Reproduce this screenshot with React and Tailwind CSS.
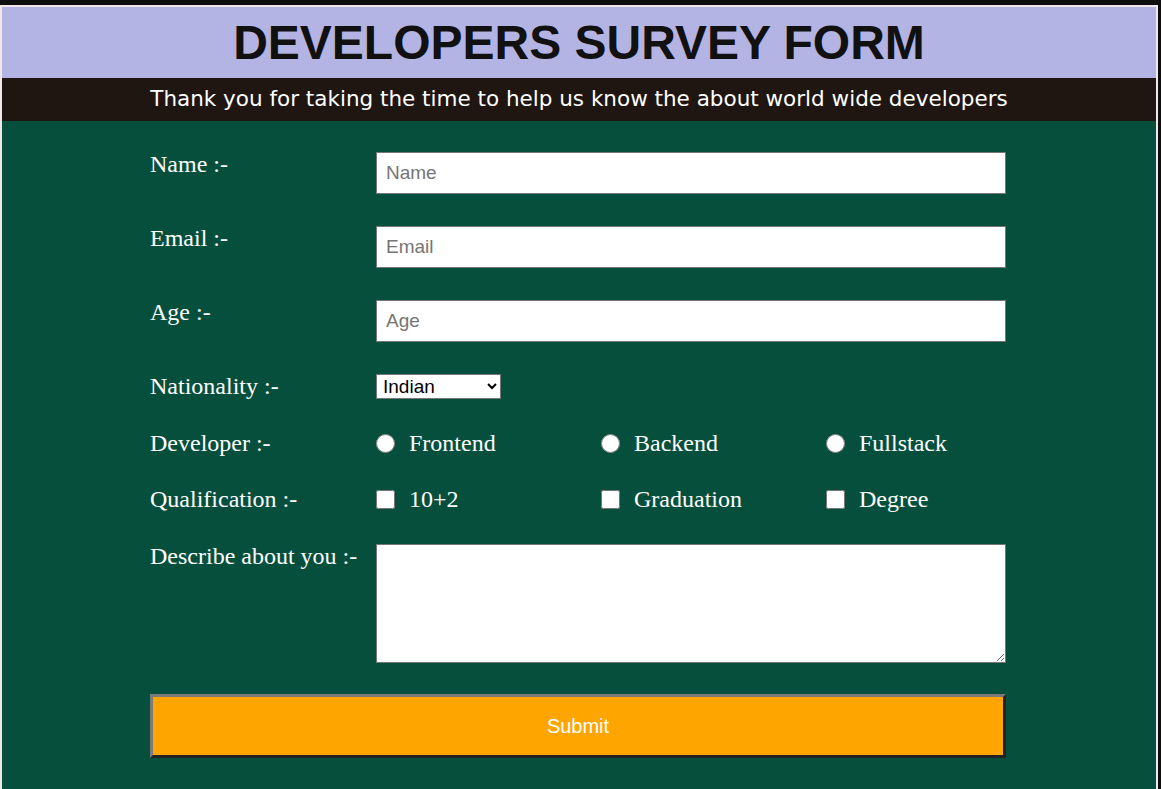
const textInputs = [
  { label: "Name :-", placeholder: "Name", type: "text" },
  { label: "Email :-", placeholder: "Email", type: "email" },
  { label: "Age :-", placeholder: "Age", type: "number" },
];

const serif = "font-['Liberation_Serif','Times_New_Roman',serif]";
const sans = "font-['Liberation_Sans',Arial,sans-serif]";

function Row({ label, children, lh = "leading-[25px]" }) {
  return (
    <div className="flex items-start">
      <label className={`w-[226px] shrink-0 text-[24px] ${lh} text-white ${serif}`}>{label}</label>
      <div className="flex-1">{children}</div>
    </div>
  );
}

function Choices({ type, name, items, lh }) {
  return (
    <div className="flex">
      {items.map((item) => (
        <label key={item} className={`flex w-[225px] items-center text-[24px] ${lh} text-white ${serif}`}>
          <input type={type} name={name} className="m-0 mr-[14px] h-[19px] w-[19px] shrink-0" />
          {item}
        </label>
      ))}
    </div>
  );
}

export default function App() {
  return (
    <div className="min-h-screen bg-[#0e0e0e] pt-[5px] pr-[3px]">
      <div className="border-2 border-b-0 border-[#f1e7e9]">
        <header className="flex h-[71px] items-center justify-center bg-[#b4b4e4]">
          <h1 className={`text-[48px] leading-none font-bold text-[#111] ${sans}`}>DEVELOPERS SURVEY FORM</h1>
        </header>
        <p className="flex h-[43px] items-center justify-center bg-[#1f1612] font-['DejaVu_Sans',Verdana,sans-serif] text-[21.5px] text-white">
          Thank you for taking the time to help us know the about world wide developers
        </p>
        <form className="flex w-full flex-col gap-[32px] bg-[#064f3d] pt-[31px] pr-[150px] pb-[32px] pl-[148px]">
          {textInputs.map((f) => (
            <Row key={f.label} label={f.label}>
              <input
                type={f.type}
                placeholder={f.placeholder}
                className={`block h-[42px] w-full border border-[#767676] bg-white px-[9px] text-[19px] text-black placeholder:text-[#757575] ${sans}`}
              />
            </Row>
          ))}
          <Row label="Nationality :-">
            <select className={`block h-[25px] w-[125px] border border-[#767676] bg-white px-[2px] text-[19px] text-black ${sans}`}>
              <option>Indian</option>
              <option>Other</option>
            </select>
          </Row>
          <Row label="Developer :-" lh="leading-[24px]">
            <Choices type="radio" name="dev" lh="leading-[24px]" items={["Frontend", "Backend", "Fullstack"]} />
          </Row>
          <Row label="Qualification :-">
            <Choices type="checkbox" name="qual" lh="leading-[25px]" items={["10+2", "Graduation", "Degree"]} />
          </Row>
          <Row label="Describe about you :-">
            <textarea className="block h-[119px] w-full border border-[#767676] bg-white" />
          </Row>
          <button
            type="button"
            className={`-mt-px h-[64px] w-full border-[3px] border-t-[#7a7a7a] border-l-[#7a7a7a] border-b-[#222] border-r-[#222] bg-[#ffa500] text-[20px] text-white ${sans}`}
          >
            Submit
          </button>
        </form>
      </div>
    </div>
  );
}
